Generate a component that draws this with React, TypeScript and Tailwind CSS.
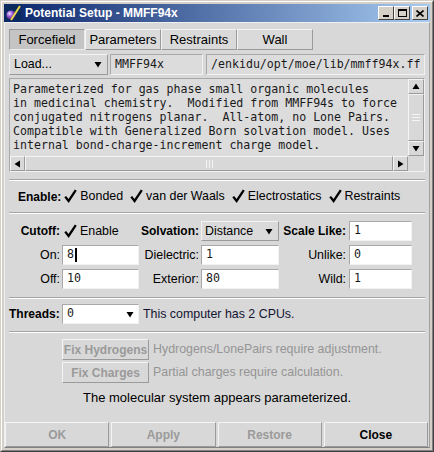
import React from "react";

const Check = () => (
  <svg width="13" height="14" viewBox="0 0 13 14" className="shrink-0">
    <path d="M1.2 7.6 L4.6 12 L11.8 1.2" fill="none" stroke="#000" strokeWidth="2.3" strokeLinejoin="miter" />
  </svg>
);

const DownTri = () => (
  <svg width="8" height="7" viewBox="0 0 8 7" className="shrink-0">
    <polygon points="0.5,1 7.5,1 4,6.5" fill="#000" />
  </svg>
);

const raised = "border border-t-[#f4f4f4] border-l-[#f4f4f4] border-r-[#9a9a9a] border-b-[#9a9a9a]";
const sunken = "border border-t-[#a8a8a8] border-l-[#a8a8a8] border-r-[#f2f2f2] border-b-[#f2f2f2]";
const mono = "font-['DejaVu_Sans_Mono',monospace] text-[11.6px] text-[#1a1a1a]";

const Field = ({ v, cursor }: { v: string; cursor?: boolean }) => (
  <div className={`h-[20px] bg-white ${sunken} flex items-center pl-[4px] ${mono}`}>
    <span>{v}</span>
    {cursor && <span className="inline-block w-[2px] h-[14px] bg-black ml-[1px]" />}
  </div>
);

const Label = ({ t, bold }: { t: string; bold?: boolean }) => (
  <div className={`h-[20px] flex items-center justify-end pr-[2px] whitespace-nowrap ${bold ? "font-bold text-[12px]" : ""}`}>{t}</div>
);

const Sep = () => <div className="h-[2px] border-t border-t-[#a4a4a4] border-b border-b-white" />;

const CheckItem = ({ t }: { t: string }) => (
  <div className="flex items-center gap-[3px] whitespace-nowrap">
    <Check />
    <span>{t}</span>
  </div>
);

export default function App() {
  return (
    <div className="w-[434px] h-[452px] bg-[#d4d0c8] border border-t-[#d4d0c8] border-l-[#d4d0c8] border-r-[#404040] border-b-[#404040] font-['Liberation_Sans',Arial,sans-serif] text-[12.4px] text-black overflow-hidden">
      <div className="h-full border border-t-white border-l-white border-r-[#808080] border-b-[#808080] p-[2px] flex flex-col">
        {/* Title bar */}
        <div className="h-[18px] shrink-0 flex items-center bg-[linear-gradient(to_right,#0a246a,#a6caf0)] pl-[1px] pr-[2px]">
          <svg width="16" height="16" viewBox="0 0 16 16" className="shrink-0">
            <rect x="0" y="0" width="16" height="16" fill="#0b2a5c" />
            <defs>
              <radialGradient id="sph" cx="0.35" cy="0.35" r="0.7">
                <stop offset="0" stopColor="#f0e0ff" />
                <stop offset="0.45" stopColor="#9a5ad8" />
                <stop offset="1" stopColor="#3a1068" />
              </radialGradient>
            </defs>
            <circle cx="6" cy="10" r="4.6" fill="url(#sph)" />
            <path d="M6 15 L15 1" stroke="#e8d84a" strokeWidth="2" />
          </svg>
          <span className="ml-[4px] text-white font-bold text-[12px] whitespace-nowrap">Potential Setup - MMFF94x</span>
          <div className="ml-auto flex items-center">
            <div className="w-[16px] h-[14px] bg-[#d4d0c8] border border-t-white border-l-white border-r-[#404040] border-b-[#404040] flex items-end justify-center pb-[2px]">
              <div className="w-[6px] h-[2px] bg-black" />
            </div>
            <div className="w-[16px] h-[14px] bg-[#d4d0c8] border border-t-white border-l-white border-r-[#404040] border-b-[#404040] flex items-center justify-center">
              <div className="w-[9px] h-[8px] border border-black border-t-2" />
            </div>
            <div className="ml-[2px] w-[16px] h-[14px] bg-[#d4d0c8] border border-t-white border-l-white border-r-[#404040] border-b-[#404040] flex items-center justify-center">
              <svg width="8" height="7" viewBox="0 0 8 7">
                <path d="M0.5 0.5 L7.5 6.5 M7.5 0.5 L0.5 6.5" stroke="#000" strokeWidth="1.6" />
              </svg>
            </div>
          </div>
        </div>

        {/* Panel */}
        <div className="flex-1 bg-[#d8d8d8] border border-t-[#efefef] border-l-[#efefef] border-r-[#a0a0a0] border-b-[#808080] flex flex-col">
          <div className="px-[4px] pt-[6px] flex flex-col">
            {/* Tabs */}
            <div className="flex h-[21px] text-[13px]">
              <div className="w-[76px] bg-[#c4c4c4] border border-t-[#9a9a9a] border-l-[#9a9a9a] border-r-[#ececec] border-b-[#ececec] flex items-center justify-center">Forcefield</div>
              <div className={`w-[76px] bg-[#dadada] ${raised} flex items-center justify-center`}>Parameters</div>
              <div className={`w-[76px] bg-[#dadada] ${raised} flex items-center justify-center`}>Restraints</div>
              <div className={`w-[76px] bg-[#dadada] ${raised} flex items-center justify-center`}>Wall</div>
            </div>

            {/* Load row */}
            <div className="mt-[4px] flex h-[21px]">
              <div className={`w-[99px] bg-[#dadada] ${raised} flex items-center pl-[4px] pr-[5px]`}>
                <span>Load...</span>
                <span className="ml-auto"><DownTri /></span>
              </div>
              <div className={`ml-[2px] w-[93px] bg-[#dcdcdc] ${sunken} flex items-center pl-[4px] ${mono}`}>MMFF94x</div>
              <div className={`ml-[3px] flex-1 bg-[#dcdcdc] ${sunken} flex items-center pl-[4px] ${mono}`}>/enkidu/opt/moe/lib/mmff94x.ff</div>
            </div>

            {/* Text area */}
            <div className={`mt-[3px] h-[94px] ${sunken} bg-[#dcdcdc] flex flex-col`}>
              <div className="flex h-[77px]">
                <div className={`flex-1 pl-[3px] pt-[3px] leading-[14px] whitespace-pre ${mono} overflow-hidden`}>
                  {"Parameterized for gas phase small organic molecules\nin medicinal chemistry.  Modified from MMFF94s to force\nconjugated nitrogens planar.  All-atom, no Lone Pairs.\nCompatible with Generalized Born solvation model. Uses\ninternal bond-charge-increment charge model."}
                </div>
                <div className="w-[16px] flex flex-col bg-[#c8c8c8]">
                  <div className={`h-[15px] bg-[#d8d8d8] ${raised} flex items-center justify-center`}>
                    <svg width="8" height="7" viewBox="0 0 8 7"><polygon points="4,0.5 7.5,6 0.5,6" fill="#000" /></svg>
                  </div>
                  <div className={`flex-1 bg-[#d8d8d8] ${raised} flex items-center justify-center`}>
                    <div className="flex flex-col gap-[2px]">
                      <div className="w-[8px] h-[1px] bg-[#f4f4f4]" />
                      <div className="w-[8px] h-[1px] bg-[#f4f4f4]" />
                      <div className="w-[8px] h-[1px] bg-[#f4f4f4]" />
                    </div>
                  </div>
                  <div className={`h-[15px] bg-[#d8d8d8] ${raised} flex items-center justify-center`}>
                    <DownTri />
                  </div>
                </div>
              </div>
              <div className="flex h-[15px]">
                <div className="flex-1 flex">
                  <div className={`w-[15px] bg-[#d8d8d8] ${raised} flex items-center justify-center`}>
                    <svg width="7" height="8" viewBox="0 0 7 8"><polygon points="0.5,4 6,0.5 6,7.5" fill="#000" /></svg>
                  </div>
                  <div className={`flex-1 bg-[#d8d8d8] ${raised} flex items-center justify-center`}>
                    <div className="flex gap-[2px]">
                      <div className="w-[1px] h-[8px] bg-[#f4f4f4]" />
                      <div className="w-[1px] h-[8px] bg-[#f4f4f4]" />
                      <div className="w-[1px] h-[8px] bg-[#f4f4f4]" />
                    </div>
                  </div>
                  <div className={`w-[15px] bg-[#d8d8d8] ${raised} flex items-center justify-center`}>
                    <svg width="7" height="8" viewBox="0 0 7 8"><polygon points="6.5,4 1,0.5 1,7.5" fill="#000" /></svg>
                  </div>
                </div>
                <div className="w-[16px] bg-[#d8d8d8]" />
              </div>
            </div>

            <div className="mt-[7px]"><Sep /></div>

            {/* Enable row */}
            <div className="h-[31px] flex items-center pl-[9px] gap-[7px]">
              <span className="font-bold text-[12px] mr-[-4px]">Enable:</span>
              <CheckItem t="Bonded" />
              <CheckItem t="van der Waals" />
              <CheckItem t="Electrostatics" />
              <CheckItem t="Restraints" />
            </div>

            <Sep />

            {/* Grid */}
            <div className="mt-[7px] grid grid-cols-[53px_77px_62px_78px_70px_63px] gap-y-[4px]">
              <Label t="Cutoff:" bold />
              <div className="h-[20px] flex items-center gap-[3px] pl-[2px]"><Check /><span>Enable</span></div>
              <Label t="Solvation:" bold />
              <div className={`h-[20px] bg-[#dadada] ${raised} flex items-center pl-[3px] pr-[5px]`}>
                <span>Distance</span>
                <span className="ml-auto"><DownTri /></span>
              </div>
              <div className="h-[20px] flex items-center justify-end pr-[3px] font-bold text-[12px] whitespace-nowrap">Scale Like:</div>
              <Field v="1" />

              <Label t="On:" />
              <Field v="8" cursor />
              <Label t="Dielectric:" />
              <Field v="1" />
              <div className="h-[20px] flex items-center justify-end pr-[3px]">Unlike:</div>
              <Field v="0" />

              <Label t="Off:" />
              <Field v="10" />
              <Label t="Exterior:" />
              <Field v="80" />
              <div className="h-[20px] flex items-center justify-end pr-[3px]">Wild:</div>
              <Field v="1" />
            </div>

            <div className="mt-[8px]"><Sep /></div>

            {/* Threads */}
            <div className="mt-[5px] flex items-center h-[20px]">
              <span className="font-bold text-[12px] w-[53px] whitespace-nowrap">Threads:</span>
              <div className={`w-[77px] h-[20px] bg-white ${sunken} flex items-center pl-[4px] pr-[4px] ${mono}`}>
                <span>0</span>
                <span className="ml-auto"><DownTri /></span>
              </div>
              <span className="ml-[4px] text-[#141432] whitespace-nowrap">This computer has 2 CPUs.</span>
            </div>

            <div className="mt-[7px]"><Sep /></div>

            {/* Fix buttons */}
            <div className="mt-[6px] flex flex-col gap-[2px] pl-[53px]">
              <div className="flex items-center h-[21px]">
                <div className={`w-[87px] h-[21px] bg-[#d8d8d8] ${raised} flex items-center justify-center font-bold text-[12px] text-[#9a9a9a] whitespace-nowrap`}>Fix Hydrogens</div>
                <span className="ml-[4px] text-[#959595] whitespace-nowrap">Hydrogens/LonePairs require adjustment.</span>
              </div>
              <div className="flex items-center h-[21px]">
                <div className={`w-[87px] h-[21px] bg-[#d8d8d8] ${raised} flex items-center justify-center font-bold text-[12px] text-[#9a9a9a] whitespace-nowrap`}>Fix Charges</div>
                <span className="ml-[4px] text-[#959595] whitespace-nowrap">Partial charges require calculation.</span>
              </div>
            </div>

            <div className="mt-[7px] h-[16px] flex items-center justify-center whitespace-nowrap text-[13px]">The molecular system appears parameterized.</div>
          </div>

          {/* Bottom buttons */}
          <div className="mt-auto flex gap-[2px] h-[25px] pr-[1px] text-[12px] font-bold">
            <div className={`flex-1 bg-[#d8d8d8] ${raised} border-r-[#7a7a7a] border-b-[#7a7a7a] flex items-center justify-center text-[#9a9a9a]`}>OK</div>
            <div className={`flex-1 bg-[#d8d8d8] ${raised} border-r-[#7a7a7a] border-b-[#7a7a7a] flex items-center justify-center text-[#9a9a9a]`}>Apply</div>
            <div className={`flex-1 bg-[#d8d8d8] ${raised} border-r-[#7a7a7a] border-b-[#7a7a7a] flex items-center justify-center text-[#9a9a9a]`}>Restore</div>
            <div className={`flex-1 bg-[#d8d8d8] ${raised} border-r-[#7a7a7a] border-b-[#7a7a7a] flex items-center justify-center`}>Close</div>
          </div>
        </div>
      </div>
    </div>
  );
}
